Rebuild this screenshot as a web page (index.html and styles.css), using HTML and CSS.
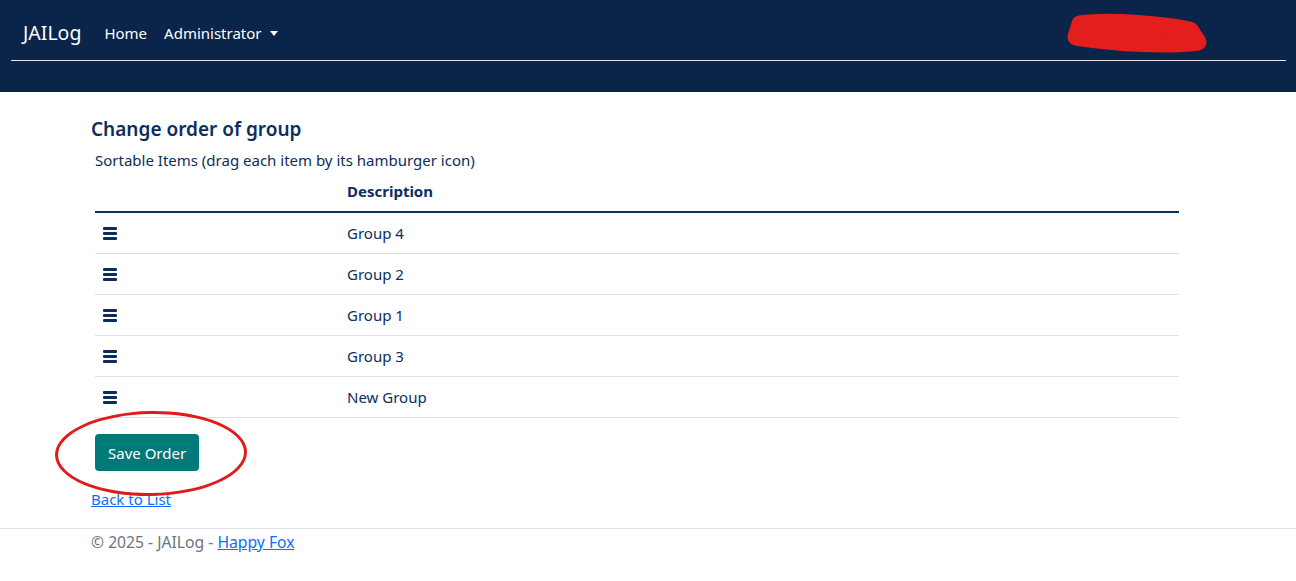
FILE: index.html
```html
<!DOCTYPE html>
<html lang="en">
<head>
<meta charset="utf-8">
<title>Change order of group - JAILog</title>
<link rel="stylesheet" href="styles.css">
</head>
<body>
<header class="navbar">
  <div class="navbar-inner">
    <a class="brand" href="#">JAILog</a>
    <ul class="nav-links">
      <li><a href="#">Home</a></li>
      <li><a href="#" class="dropdown">Administrator <span class="caret"></span></a></li>
    </ul>
    <div class="nav-right"><span class="caret user-caret"></span></div>
  </div>
  <svg class="scribble" width="160" height="50" viewBox="0 0 160 50" aria-hidden="true">
    <path d="M20 18 C 50 14, 100 18, 130 24 L 138 36 C 110 40, 60 38, 16 31 Z" fill="#e41d1d" stroke="#e41d1d" stroke-width="17" stroke-linejoin="round"/>
  </svg>
</header>

<main class="container">
  <h2 class="title">Change order of group</h2>
  <p class="hint">Sortable Items (drag each item by its hamburger icon)</p>
  <table class="sort-table">
    <thead>
      <tr><th class="col-handle"></th><th>Description</th></tr>
    </thead>
    <tbody>
      <tr><td><span class="handle"><i></i><i></i><i></i></span></td><td>Group 4</td></tr>
      <tr><td><span class="handle"><i></i><i></i><i></i></span></td><td>Group 2</td></tr>
      <tr><td><span class="handle"><i></i><i></i><i></i></span></td><td>Group 1</td></tr>
      <tr><td><span class="handle"><i></i><i></i><i></i></span></td><td>Group 3</td></tr>
      <tr><td><span class="handle"><i></i><i></i><i></i></span></td><td>New Group</td></tr>
    </tbody>
  </table>
  <div class="actions">
    <button class="btn-save" type="button">Save Order</button>
    <span class="circle" aria-hidden="true"></span>
  </div>
  <a class="back" href="#">Back to List</a>
</main>

<footer class="footer">
  <div class="container">© 2025 - JAILog - <a href="#">Happy Fox</a></div>
</footer>
</body>
</html>
```

FILE: styles.css
```css
* { box-sizing: border-box; }
html, body { margin: 0; padding: 0; }
body {
  font-family: "Noto Sans", "Open Sans", sans-serif;
  font-size: 15px;
  line-height: 24px;
  color: #0b2e5e;
  background: #fff;
}
a { color: #0d6efd; }

.navbar {
  position: relative;
  background: #0b2449;
  height: 92px;
  padding: 9px 10px 0 11px;
}
.navbar-inner {
  display: flex;
  align-items: center;
  height: 52px;
  border-bottom: 1px solid #e6e6e6;
  padding: 2px 12px 6px;
}
.brand {
  color: #fff;
  text-decoration: none;
  font-size: 19.5px;
  margin-right: 23px;
}
.nav-links {
  list-style: none;
  display: flex;
  margin: 0;
  padding: 0;
  gap: 17px;
}
.nav-links a {
  color: #fff;
  text-decoration: none;
  font-size: 15px;
}
.caret {
  display: inline-block;
  width: 0; height: 0;
  border-left: 4px solid transparent;
  border-right: 4px solid transparent;
  border-top: 5px solid #fff;
  vertical-align: 3px;
  margin-left: 5px;
}
.nav-right { margin-left: auto; margin-right: 86px; }
.scribble {
  position: absolute;
  left: 1060px;
  top: 6px;
}

.container {
  width: 1140px;
  margin: 0 auto;
  padding: 0 12px 0 13px;
}
main.container { padding-top: 25px; }
.title {
  font-size: 19px;
  font-weight: 600;
  line-height: 24px;
  margin: 0 0 7px;
  color: #0b2e5e;
}
.hint { margin: 0 0 0 4px; }

.sort-table {
  width: 1084px;
  margin-left: 4px;
  border-collapse: collapse;
}
.sort-table th, .sort-table td {
  text-align: left;
  padding: 8px;
  height: 41px;
  border-bottom: 1px solid #dee2e6;
}
.sort-table th {
  font-weight: 700;
  height: 40px;
  padding-top: 6px;
  border-bottom: 2px solid #0b2e5e;
}
.sort-table .col-handle { width: 244px; }
.handle {
  display: inline-flex;
  flex-direction: column;
  gap: 2px;
  width: 14px;
  vertical-align: middle;
  margin-left: 0;
  margin-top: -2px;
}
.handle i {
  display: block;
  height: 3px;
  background: #0b2e5e;
  border-radius: 1px;
}

.actions {
  position: relative;
  margin: 16px 0 0 4px;
}
.btn-save {
  font-family: inherit;
  font-size: 15px;
  color: #fff;
  background: #007a78;
  border: none;
  border-radius: 4px;
  height: 37px;
  padding: 0 13px;
  cursor: pointer;
}
.circle {
  position: absolute;
  left: -40px;
  top: -23px;
  width: 192px;
  height: 85px;
  border: 3px solid #e01b1b;
  border-radius: 50%;
  transform: rotate(-1deg);
}
.back {
  display: inline-block;
  margin-top: 16px;
}

.footer {
  margin-top: 17px;
  border-top: 1px solid #dee2e6;
  color: #6c757d;
  padding-top: 1px;
  font-size: 15.7px;
}
```
